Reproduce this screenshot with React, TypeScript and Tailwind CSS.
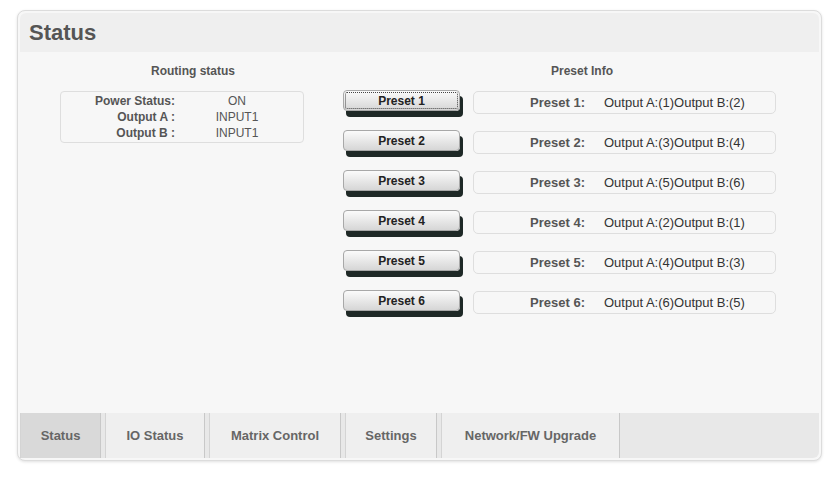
import React from "react";

const presets = [
  { n: 1, v: "Output A:(1)Output B:(2)" },
  { n: 2, v: "Output A:(3)Output B:(4)" },
  { n: 3, v: "Output A:(5)Output B:(6)" },
  { n: 4, v: "Output A:(2)Output B:(1)" },
  { n: 5, v: "Output A:(4)Output B:(3)" },
  { n: 6, v: "Output A:(6)Output B:(5)" },
];

const tabs = [
  { label: "Status", w: "w-[81px]", active: true },
  { label: "IO Status", w: "w-[100px]" },
  { label: "Matrix Control", w: "w-[132px]" },
  { label: "Settings", w: "w-[92px]" },
  { label: "Network/FW Upgrade", w: "w-[179px]" },
];

export default function App() {
  return (
    <div
      className="w-[837px] h-[477px] bg-white pt-[10px] pl-[17px]"
      style={{ fontFamily: '"Liberation Sans", Arial, sans-serif' }}
    >
      <div className="w-[805px] h-[451px] border border-[#dcdcdc] rounded-[8px] shadow-[0_1px_3px_rgba(0,0,0,0.12)] p-[2px] flex flex-col bg-[#f7f7f7]">
        {/* Header */}
        <div className="h-[39px] bg-[#efefef] rounded-t-[6px] flex items-center pl-[9px]">
          <span className="text-[22px] font-bold text-[#555555] leading-none">Status</span>
        </div>

        {/* Body */}
        <div className="flex-1 bg-[#f7f7f7] flex pt-[11px]">
          {/* Left column */}
          <div className="w-[323px] flex flex-col">
            <div className="pl-[23px] text-center text-[12px] leading-[16px] font-bold text-[#555555]">
              Routing status
            </div>
            <div className="mt-[12px] ml-[40px] w-[244px] h-[52px] border border-[#dedede] rounded-[4px] bg-[#f7f7f7] pt-[1px] text-[12px] leading-[16px] text-[#555555]">
              {[
                ["Power Status:", "ON"],
                ["Output A :", "INPUT1"],
                ["Output B :", "INPUT1"],
              ].map(([l, v]) => (
                <div key={l} className="flex">
                  <div className="w-[114px] text-right font-bold">{l}</div>
                  <div className="w-[124px] text-center">{v}</div>
                </div>
              ))}
            </div>
          </div>

          {/* Right column */}
          <div className="w-[434px] flex flex-col">
            <div className="pl-[44px] text-center text-[12px] leading-[16px] font-bold text-[#555555]">
              Preset Info
            </div>
            <div className="mt-[11px] flex flex-col gap-[18px]">
              {presets.map((p) => (
                <div key={p.n} className="flex items-start h-[22px]">
                  <div className="w-[117px] h-[21px] rounded-[4px] border border-[#a8a8a8] bg-gradient-to-b from-[#fbfbfb] to-[#d6d6d6] shadow-[3px_6px_0_#1e2826] flex items-center justify-center p-[1px]">
                    <div
                      className={
                        "w-full h-full flex items-center justify-center text-[12px] font-bold text-[#222222] rounded-[2px] " +
                        (p.n === 1 ? "border border-dotted border-[#444444]" : "border border-transparent")
                      }
                    >
                      Preset {p.n}
                    </div>
                  </div>
                  <div className="ml-[13px] mt-[1px] w-[303px] h-[23px] border border-[#dedede] rounded-[5px] flex items-center text-[13px]">
                    <div className="w-[111px] text-right font-bold text-[#555555]">Preset {p.n}:</div>
                    <div className="ml-[19px] text-[#333333]">{p.v}</div>
                  </div>
                </div>
              ))}
            </div>
          </div>
        </div>

        {/* Tabs */}
        <div className="h-[45px] bg-[#e8e8e8] flex rounded-b-[6px]">
          {tabs.map((t) => (
            <div
              key={t.label}
              className={
                t.w +
                " mr-[4px] h-full flex items-center justify-center border-l border-r border-l-[#d4d4d4] border-r-[#c8c8c8] text-[13px] font-bold text-[#666666] " +
                (t.active ? "bg-[#d9d9d9]" : "bg-[#efefef]")
              }
            >
              {t.label}
            </div>
          ))}
        </div>
      </div>
    </div>
  );
}
